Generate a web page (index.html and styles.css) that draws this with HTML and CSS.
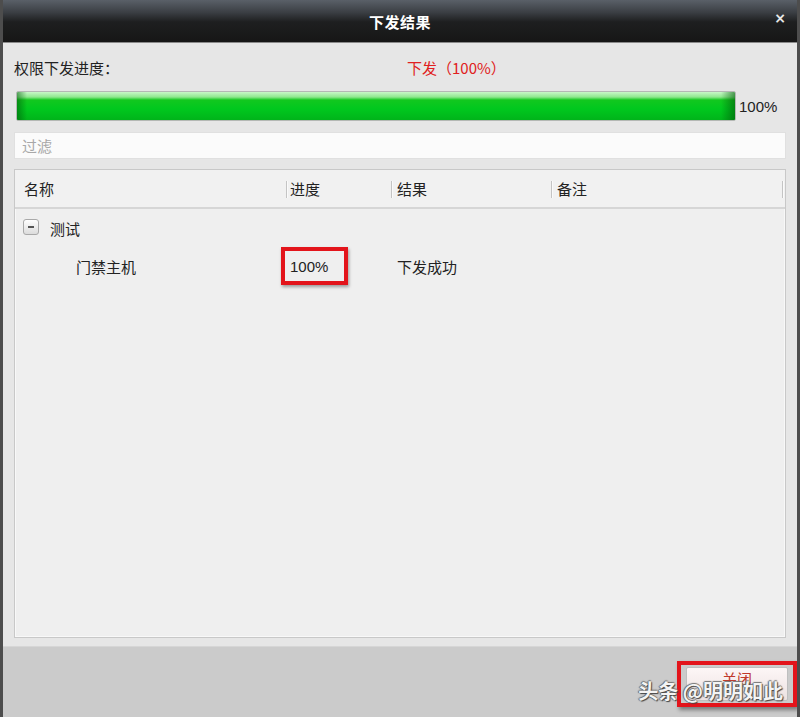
FILE: index.html
```html
<!DOCTYPE html>
<html lang="zh">
<head>
<meta charset="utf-8">
<title>下发结果</title>
<link rel="stylesheet" href="styles.css">
</head>
<body>
<div class="window">
  <div class="titlebar">
    <span class="title">下发结果</span>
    <span class="close">×</span>
  </div>
  <div class="content">
    <div class="status-row">
      <span class="status-label">权限下发进度：</span>
      <span class="status-value">下发（100%）</span>
    </div>
    <div class="progress-row">
      <div class="progress"><div class="progress-fill" style="width:100%"></div></div>
      <span class="progress-text">100%</span>
    </div>
    <div class="filter">过滤</div>
    <div class="table">
      <div class="thead">
        <div class="th c1">名称</div>
        <div class="th c2"><span class="sep"></span>进度</div>
        <div class="th c3"><span class="sep"></span>结果</div>
        <div class="th c4"><span class="sep"></span>备注<span class="sep end"></span></div>
      </div>
      <div class="tr">
        <div class="td c1 group"><span class="toggle"><span class="minus"></span></span>测试</div>
      </div>
      <div class="tr">
        <div class="td c1 child">门禁主机</div>
        <div class="td c2"><span class="highlight">100%</span></div>
        <div class="td c3">下发成功</div>
        <div class="td c4"></div>
      </div>
    </div>
  </div>
  <div class="footer">
    <div class="btn-wrap">
      <button class="btn">关闭</button>
    </div>
    <span class="watermark">头条 @明明如此</span>
  </div>
</div>
</body>
</html>
```

FILE: styles.css
```css
html, body {
  margin: 0;
  padding: 0;
  background: #cfcfcf;
}
body {
  font-family: "Noto Sans CJK SC", "Noto Sans", sans-serif;
  color: #222;
}
.window {
  width: 800px;
  height: 717px;
  box-sizing: border-box;
  display: flex;
  flex-direction: column;
  border-left: 3px solid #4d4d4d;
  border-right: 3px solid #4d4d4d;
  background: #e6e6e6;
  overflow: hidden;
  position: relative;
}
.titlebar {
  height: 43px;
  flex: none;
  display: flex;
  align-items: center;
  justify-content: center;
  position: relative;
  background: linear-gradient(#5a6068 0%, #3a3e43 30%, #1e1f20 52%, #161616 100%);
  border-bottom: 1px solid #8a8a8a;
  box-sizing: border-box;
}
.title {
  color: #fff;
  font-size: 15px;
  font-weight: bold;
  letter-spacing: 0.5px;
}
.close {
  position: absolute;
  right: 11px;
  top: 10px;
  color: #e8e8e8;
  font-family: "DejaVu Sans", sans-serif;
  font-weight: bold;
  font-size: 14px;
}
.content {
  flex: 1;
  display: flex;
  flex-direction: column;
  padding: 0 11px 0 11px;
  background: #e6e6e6;
  min-height: 0;
}
.status-row {
  height: 47px;
  display: flex;
  align-items: center;
  font-size: 15px;
  padding-top: 1px;
  box-sizing: border-box;
}
.status-label {
  width: 393px;
  color: #222;
}
.status-value {
  color: #e02020;
}
.progress-row {
  display: flex;
  align-items: center;
  margin-left: 2px;
  height: 32px;
}
.progress {
  width: 720px;
  height: 30px;
  box-sizing: border-box;
  border: 1px solid #b4b8b4;
  border-radius: 2px;
  background: #f4f4f4;
  overflow: hidden;
}
.progress-fill {
  height: 100%;
  background:
    linear-gradient(90deg, rgba(0,90,10,0.55) 0px, rgba(0,90,10,0) 10px, rgba(0,90,10,0) calc(100% - 14px), rgba(0,90,10,0.6) 100%),
    linear-gradient(#c8f7c8 0px, #8fe88f 5px, #12c81f 8px, #00c81e 60%, #00b41a 100%);
}
.progress-text {
  margin-left: 3px;
  font-family: "Liberation Sans", Arial, sans-serif;
  font-size: 15px;
  color: #222;
}
.filter {
  margin-top: 10px;
  height: 27px;
  box-sizing: border-box;
  background: #fbfbfb;
  border: 1px solid #e0e0e0;
  color: #a8a8a8;
  font-size: 15px;
  line-height: 25px;
  padding-left: 7px;
}
.table {
  margin-top: 10px;
  margin-bottom: 8px;
  flex: 1;
  background: #efefef;
  border: 1px solid #c8c8c8;
  box-shadow: inset 0 0 0 1px #f8f8f8;
}
.thead {
  display: flex;
  height: 37px;
  background: #f1f1f1;
  border-bottom: 2px solid #d6d6d6;
  font-size: 15px;
}
.th, .td {
  display: flex;
  align-items: center;
  position: relative;
  box-sizing: border-box;
}
.c1 { width: 271px; padding-left: 9px; }
.c2 { width: 105px; padding-left: 4px; }
.c3 { width: 160px; padding-left: 6px; }
.c4 { width: 232px; padding-left: 6px; }
.sep {
  position: absolute;
  left: 0;
  top: 11px;
  height: 17px;
  width: 1px;
  background: #c4c4c4;
  box-shadow: 1px 0 0 #fafafa;
}
.sep.end {
  left: auto;
  right: 0;
}
.tr {
  display: flex;
  height: 38px;
  font-size: 15px;
}
.tr:first-of-type {
  height: 39px;
}
.group {
  padding-left: 8px;
}
.toggle {
  width: 14px;
  height: 14px;
  border: 1px solid #a9a9a9;
  border-radius: 3px;
  background: linear-gradient(#ffffff, #dcdcdc);
  display: inline-flex;
  align-items: center;
  justify-content: center;
  margin-right: 11px;
  margin-top: -2px;
}
.minus {
  width: 6px;
  height: 2px;
  background: #555;
}
.child {
  padding-left: 61px;
}
.highlight {
  display: inline-flex;
  align-items: center;
  height: 38px;
  box-sizing: border-box;
  border: 4px solid #e3141b;
  padding: 0 16px 0 5px;
  margin-left: -9px;
  box-shadow: 1px 2px 3px rgba(0,0,0,0.35);
  font-family: "Liberation Sans", Arial, sans-serif;
  font-size: 15px;
}
.footer {
  height: 70px;
  flex: none;
  background: #cbcbcb;
  border-top: 1px solid #d6d6d6;
  display: flex;
  justify-content: flex-end;
  align-items: flex-start;
  position: relative;
}
.btn-wrap {
  margin-top: 14px;
  margin-right: 0;
  border: 4px solid #e3141b;
  padding: 1px 5px 2px 5px;
  box-shadow: 2px 3px 4px rgba(0,0,0,0.4);
}
.btn {
  width: 102px;
  height: 34px;
  border: 1px solid #bfbfbf;
  border-radius: 2px;
  background: linear-gradient(#fdf6f6, #ece2e2);
  color: #c0392b;
  font-family: "Noto Sans CJK SC", sans-serif;
  font-size: 15px;
  padding: 0 0 10px 0;
  box-sizing: border-box;
  line-height: 22px;
}
.watermark {
  position: absolute;
  right: 14px;
  top: 29px;
  font-size: 20px;
  color: #f4f4f4;
  font-weight: bold;
  letter-spacing: 0;
  text-shadow: 1px 1px 1px #444, -1px 0 1px #666, 0 -1px 1px #777;
}
```
